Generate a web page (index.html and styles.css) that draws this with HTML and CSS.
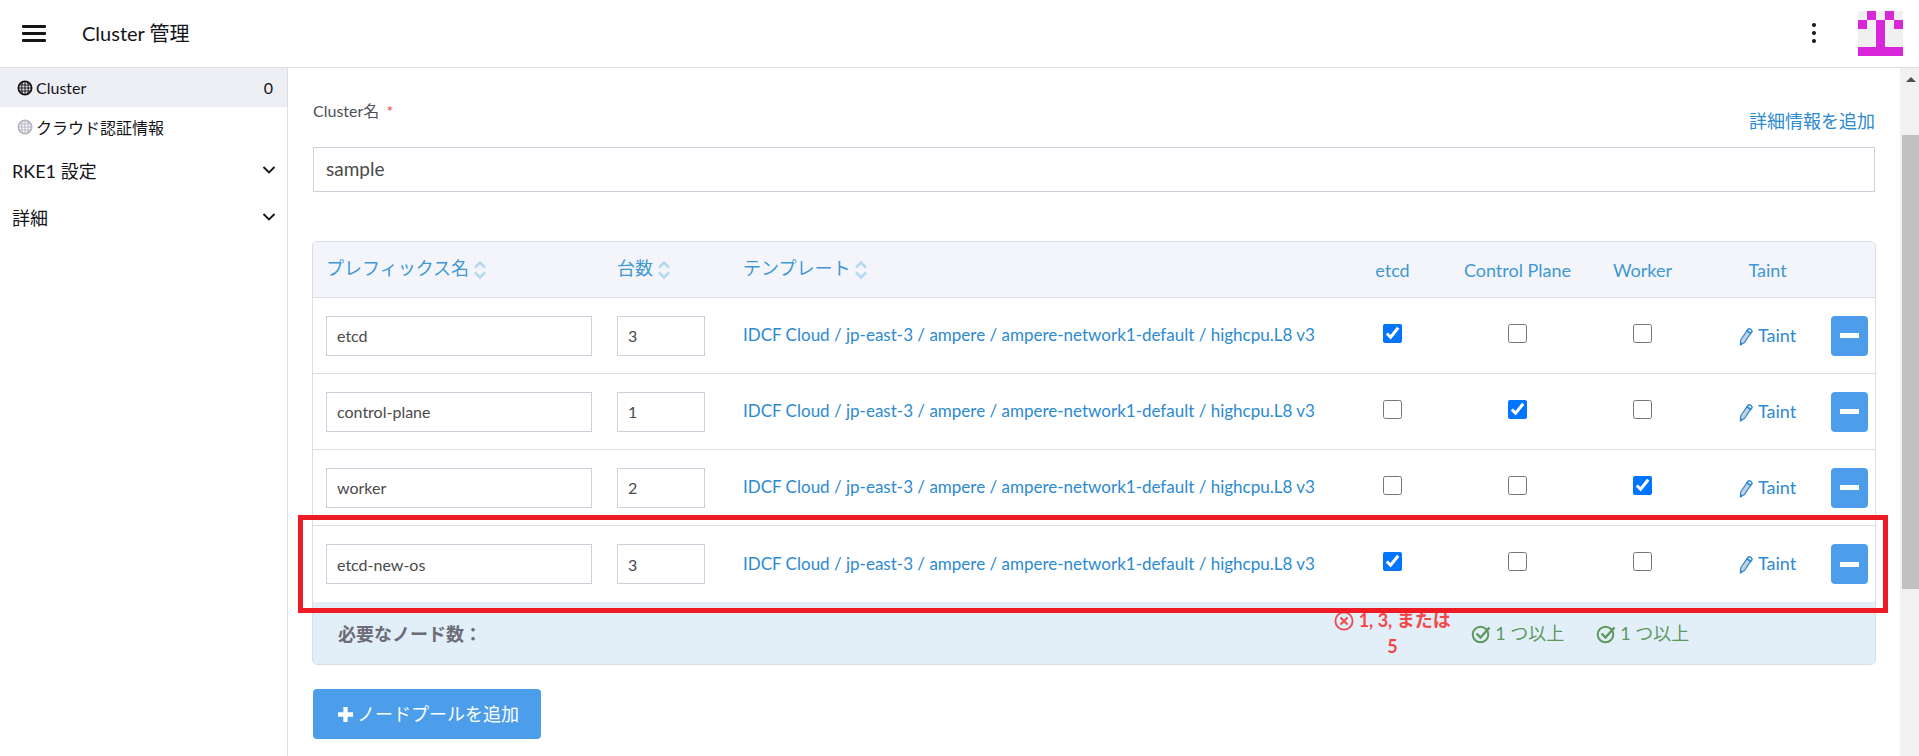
FILE: index.html
```html
<!DOCTYPE html>
<html lang="ja">
<head>
    <meta charset="UTF-8">
    <meta name="viewport" content="width=device-width, initial-scale=1.0">
    <title>Cluster 管理</title>
    <link rel="stylesheet" href="styles.css">
</head>
<body>
    <!-- Iconos compartidos -->
    <svg class="sprite" aria-hidden="true">
        <symbol id="globe" viewBox="0 0 16 16">
            <circle cx="8" cy="8" r="6.6" fill="none" stroke="currentColor" stroke-width="1.8"/>
            <path d="M8 1v14M1.500 8h13M2 5h12M2 11h12M5.800 1.500C4.300 5 4.300 11 5.800 14.500M10.200 1.500c1.500 3.500 1.500 9.500 0 13" fill="none" stroke="currentColor" stroke-width="1"/>
        </symbol>
        <symbol id="chevron" viewBox="0 0 14 10">
            <path d="M1.5 2L7 7.5 12.5 2" fill="none" stroke="currentColor" stroke-width="1.8"/>
        </symbol>
        <symbol id="sort" viewBox="0 0 14 20">
            <path d="M2 7.5L7 2.5l5 5M2 12.5l5 5 5-5" fill="none" stroke="currentColor" stroke-width="2.6"/>
        </symbol>
        <symbol id="pencil" viewBox="0 0 14 18">
            <path d="M1.6 12L8 2.6l3.8 2.6L5.4 14.6 1.4 17z" fill="#c3cfe2" stroke="currentColor" stroke-width="1.2" stroke-linejoin="round"/>
            <path d="M8 2.8L9.2 1.2q1-.8 2.2 0l1 .8q1 1 .3 2L11.6 5.4z" fill="none" stroke="currentColor" stroke-width="1.5"/>
            <path d="M1.3 17.2l.3-3.2 2.4 1.6z" fill="currentColor"/>
        </symbol>
        <symbol id="error" viewBox="0 0 20 20">
            <circle cx="10" cy="10" r="8.6" fill="none" stroke="currentColor" stroke-width="1.8"/>
            <path d="M6.5 6.5l7 7M13.5 6.5l-7 7" stroke="currentColor" stroke-width="2"/>
        </symbol>
        <symbol id="check" viewBox="0 0 20 20">
            <circle cx="9.5" cy="10.5" r="7.8" fill="none" stroke="currentColor" stroke-width="2"/>
            <path d="M5.5 9.5l4 4L18.5 3.5" fill="none" stroke="currentColor" stroke-width="2.4"/>
        </symbol>
    </svg>

    <header class="header">
        <button class="menu-btn" type="button" aria-label="メニュー"><span></span><span></span><span></span></button>
        <h1>Cluster 管理</h1>
        <button class="more-btn" type="button" aria-label="その他"><span></span><span></span><span></span></button>
        <svg class="avatar" viewBox="0 0 5 5" shape-rendering="crispEdges">
            <rect width="5" height="5" fill="#f0f0f0"/>
            <path d="M1 0h1v1h-1zM3 0h1v1h-1zM0 1h1v1h-1zM4 1h1v1h-1zM2 1h1v3h-1zM0 4h5v1h-5z" fill="#d926d9"/>
        </svg>
    </header>

    <div class="layout">
        <nav class="sidebar">
            <a class="item active" href="#"><svg><use href="#globe"/></svg>Cluster<span class="count">0</span></a>
            <a class="item" href="#"><svg><use href="#globe"/></svg>クラウド認証情報</a>
            <button class="group" type="button">RKE1 設定<svg><use href="#chevron"/></svg></button>
            <button class="group" type="button">詳細<svg><use href="#chevron"/></svg></button>
        </nav>

        <main class="content">
            <div class="field-head">
                <label for="clusterName">Cluster名 <span class="required">*</span></label>
                <a href="#">詳細情報を追加</a>
            </div>
            <input class="cluster-name" id="clusterName" type="text" value="sample">

            <div class="pools">
                <table>
                    <colgroup>
                        <col class="col-name">
                        <col class="col-count">
                        <col>
                        <col class="col-role">
                        <col class="col-role">
                        <col class="col-role">
                        <col class="col-role">
                        <col class="col-remove">
                    </colgroup>
                    <thead>
                        <tr>
                            <th><a href="#">プレフィックス名<svg><use href="#sort"/></svg></a></th>
                            <th><a href="#">台数<svg><use href="#sort"/></svg></a></th>
                            <th><a href="#">テンプレート<svg><use href="#sort"/></svg></a></th>
                            <th class="center">etcd</th>
                            <th class="center">Control Plane</th>
                            <th class="center">Worker</th>
                            <th class="center">Taint</th>
                            <th></th>
                        </tr>
                    </thead>
                    <tbody>
                        <tr>
                            <td><input type="text" value="etcd" aria-label="プレフィックス名"></td>
                            <td><input type="text" value="3" aria-label="台数"></td>
                            <td class="template"><a href="#">IDCF Cloud / jp-east-3 / ampere / ampere-network1-default / highcpu.L8 v3</a></td>
                            <td class="center"><input type="checkbox" aria-label="etcd" checked></td>
                            <td class="center"><input type="checkbox" aria-label="Control Plane"></td>
                            <td class="center"><input type="checkbox" aria-label="Worker"></td>
                            <td class="center"><a class="taint" href="#"><svg><use href="#pencil"/></svg>Taint</a></td>
                            <td class="remove"><button type="button" aria-label="削除"></button></td>
                        </tr>
                        <tr>
                            <td><input type="text" value="control-plane" aria-label="プレフィックス名"></td>
                            <td><input type="text" value="1" aria-label="台数"></td>
                            <td class="template"><a href="#">IDCF Cloud / jp-east-3 / ampere / ampere-network1-default / highcpu.L8 v3</a></td>
                            <td class="center"><input type="checkbox" aria-label="etcd"></td>
                            <td class="center"><input type="checkbox" aria-label="Control Plane" checked></td>
                            <td class="center"><input type="checkbox" aria-label="Worker"></td>
                            <td class="center"><a class="taint" href="#"><svg><use href="#pencil"/></svg>Taint</a></td>
                            <td class="remove"><button type="button" aria-label="削除"></button></td>
                        </tr>
                        <tr>
                            <td><input type="text" value="worker" aria-label="プレフィックス名"></td>
                            <td><input type="text" value="2" aria-label="台数"></td>
                            <td class="template"><a href="#">IDCF Cloud / jp-east-3 / ampere / ampere-network1-default / highcpu.L8 v3</a></td>
                            <td class="center"><input type="checkbox" aria-label="etcd"></td>
                            <td class="center"><input type="checkbox" aria-label="Control Plane"></td>
                            <td class="center"><input type="checkbox" aria-label="Worker" checked></td>
                            <td class="center"><a class="taint" href="#"><svg><use href="#pencil"/></svg>Taint</a></td>
                            <td class="remove"><button type="button" aria-label="削除"></button></td>
                        </tr>
                        <tr class="marked">
                            <td><input type="text" value="etcd-new-os" aria-label="プレフィックス名"></td>
                            <td><input type="text" value="3" aria-label="台数"></td>
                            <td class="template"><a href="#">IDCF Cloud / jp-east-3 / ampere / ampere-network1-default / highcpu.L8 v3</a></td>
                            <td class="center"><input type="checkbox" aria-label="etcd" checked></td>
                            <td class="center"><input type="checkbox" aria-label="Control Plane"></td>
                            <td class="center"><input type="checkbox" aria-label="Worker"></td>
                            <td class="center"><a class="taint" href="#"><svg><use href="#pencil"/></svg>Taint</a></td>
                            <td class="remove"><button type="button" aria-label="削除"></button></td>
                        </tr>
                    </tbody>
                    <tfoot>
                        <tr>
                            <td class="total" colspan="3">必要なノード数：</td>
                            <td class="status bad"><svg><use href="#error"/></svg> 1, 3, または 5</td>
                            <td class="status ok"><svg><use href="#check"/></svg> 1 つ以上</td>
                            <td class="status ok"><svg><use href="#check"/></svg> 1 つ以上</td>
                            <td colspan="2"></td>
                        </tr>
                    </tfoot>
                </table>
            </div>

            <button class="add-btn" type="button"><svg viewBox="0 0 14 14"><path d="M7 0v14M0 7h14" stroke="currentColor" stroke-width="4"/></svg>ノードプールを追加</button>
        </main>

        <div class="scrollbar"><div class="thumb"></div></div>
    </div>
</body>
</html>
```

FILE: styles.css
```css
* {
    box-sizing: border-box;
}
body {
    margin: 0;
    height: 100vh;
    overflow: hidden;
    display: flex;
    flex-direction: column;
    font-family: Lato, 'Noto Sans CJK JP', sans-serif;
    font-size: 18px;
    color: #141419;
    background: #fff;
}
a {
    color: #2c8ad1;
    text-decoration: none;
}
button, input {
    font-family: inherit;
    color: inherit;
}
button {
    border: none;
    background: none;
    padding: 0;
    cursor: pointer;
}
.sprite {
    display: none;
}

/* Cabecera */
.header {
    flex: none;
    height: 68px;
    display: flex;
    align-items: center;
    padding: 0 16px 0 22px;
    border-bottom: 1px solid #dcdee7;
}
.header h1 {
    flex: 1;
    margin: 0 0 2px 36px;
    font-size: 20px;
    font-weight: 400;
}
.menu-btn {
    width: 24px;
    display: grid;
    gap: 4px;
}
.menu-btn span {
    height: 3px;
    border-radius: 1px;
    background: #141419;
}
.more-btn {
    display: grid;
    gap: 4px;
    margin: 0 42px 2px 0;
}
.more-btn span {
    width: 4px;
    height: 4px;
    border-radius: 50%;
    background: #141419;
}
.avatar {
    width: 45px;
    height: 45px;
}

.layout {
    flex: 1;
    min-height: 0;
    display: flex;
}

/* Menu lateral */
.sidebar {
    flex: none;
    width: 288px;
    border-right: 1px solid #dcdee7;
}
.item {
    display: flex;
    align-items: center;
    height: 39px;
    padding: 0 14px 0 17px;
    font-size: 16px;
    color: #141419;
}
.item svg {
    width: 16px;
    height: 16px;
    margin-right: 3px;
    color: #b6b6c2;
}
.item.active {
    background: #eeeff4;
}
.item.active svg {
    color: #141419;
}
.count {
    margin-left: auto;
}
.group {
    display: flex;
    align-items: center;
    justify-content: space-between;
    width: 100%;
    height: 47px;
    padding: 0 11px 0 12px;
    font-size: 18px;
}
.group svg {
    width: 14px;
    height: 10px;
}

/* Contenido */
.content {
    flex: 1;
    min-width: 0;
    padding: 26px 25px 0;
}
.field-head {
    display: flex;
    justify-content: space-between;
    height: 53px;
}
.field-head label {
    padding-top: 5px;
    font-size: 16px;
    line-height: 24px;
    color: #4f4f59;
}
.field-head a {
    padding-top: 14px;
    line-height: 26px;
}
.required {
    margin-left: 3px;
    color: #f64747;
}
.cluster-name {
    display: block;
    width: 100%;
    height: 45px;
    padding: 0 12px 2px;
    border: 1px solid #cdcfdd;
    font-size: 19px;
    color: #4a4a4a;
}
.pools {
    margin: 49px -1px 24px;
    border: 1px solid #dcdee7;
    border-radius: 5px;
}
table {
    width: 100%;
    table-layout: fixed;
    border-collapse: separate;
    border-spacing: 0;
}
.col-name {
    width: 291px;
}
.col-count {
    width: 126px;
}
.col-role {
    width: 125px;
}
.col-remove {
    width: 45px;
}
th, td {
    padding: 0 12px 0 13px;
    text-align: left;
    font-weight: 400;
}
th {
    height: 56px;
    background: #f4f5fa;
    border-bottom: 1px solid #dcdee7;
    color: #3d98d3;
}
th:first-child {
    border-top-left-radius: 4px;
}
th:last-child {
    border-top-right-radius: 4px;
}
th a {
    display: flex;
    align-items: flex-end;
    padding-bottom: 4px;
    line-height: 24px;
    color: #3d98d3;
}
th svg {
    width: 14px;
    height: 20px;
    margin-left: 4px;
    color: #b5d9ef;
}
tbody td {
    height: 76px;
    border-bottom: 1px solid #dcdee7;
    white-space: nowrap;
}
tbody tr:last-child td {
    border-bottom: none;
}
td input[type="text"] {
    display: block;
    width: 100%;
    height: 40px;
    padding: 0 10px;
    border: 1px solid #cdcfdd;
    font-size: 16px;
    color: #4a4a4a;
}
td:nth-child(2) input[type="text"] {
    width: 88px;
}
th.center {
    padding: 0;
    text-align: center;
}
td.template {
    padding-bottom: 2px;
    font-size: 17px;
}
td.center {
    padding: 0 0 2px;
    text-align: center;
}
input[type="checkbox"] {
    width: 19px;
    height: 19px;
    margin: 0 0 4px;
    vertical-align: middle;
    accent-color: #0075ff;
}
.taint svg {
    width: 14px;
    height: 18px;
    margin-right: 5px;
    vertical-align: -4px;
}
td.remove {
    padding: 0;
}
.remove button {
    display: grid;
    place-items: center;
    width: 37px;
    height: 40px;
    margin-left: 1px;
    border-radius: 4px;
    background: #4c9eea;
}
.remove button::before {
    content: "";
    width: 19px;
    height: 5px;
    background: #fff;
}

/* Recuadro que resalta el pool nuevo */
.marked {
    position: relative;
}
.marked td:last-child::after {
    content: "";
    position: absolute;
    inset: -11px -13px -11px -15px;
    border: 5px solid #ed1c24;
    pointer-events: none;
}

tfoot td {
    height: 62px;
    background: #e2eff9;
}
tfoot td:first-child {
    border-bottom-left-radius: 4px;
}
tfoot td:last-child {
    border-bottom-right-radius: 4px;
}
td.total {
    padding-left: 25px;
    font-weight: 700;
    color: #6c6c76;
}
td.status {
    padding: 0 3px;
    text-align: center;
    line-height: 26px;
}
.status svg {
    width: 20px;
    height: 20px;
    vertical-align: -4px;
}
.bad {
    font-weight: 700;
    color: #f64747;
}
.ok {
    color: #5d995d;
}
.add-btn {
    display: flex;
    align-items: center;
    height: 50px;
    padding: 0 22px 2px 25px;
    border-radius: 4px;
    background: #4c9eea;
    font-size: 18px;
    color: #fff;
}
.add-btn svg {
    width: 15px;
    height: 15px;
    margin: 3px 4px 0 0;
}

/* Barra de desplazamiento */
.scrollbar {
    flex: none;
    width: 19px;
    padding-left: 2px;
    background: #f1f1f1;
}
.scrollbar::before {
    content: "";
    display: block;
    width: 0;
    margin: 9px auto 53px 4px;
    border: 5px solid transparent;
    border-top-width: 0;
    border-bottom-color: #505050;
}
.thumb {
    height: 66%;
    background: #c1c1c1;
}
```
